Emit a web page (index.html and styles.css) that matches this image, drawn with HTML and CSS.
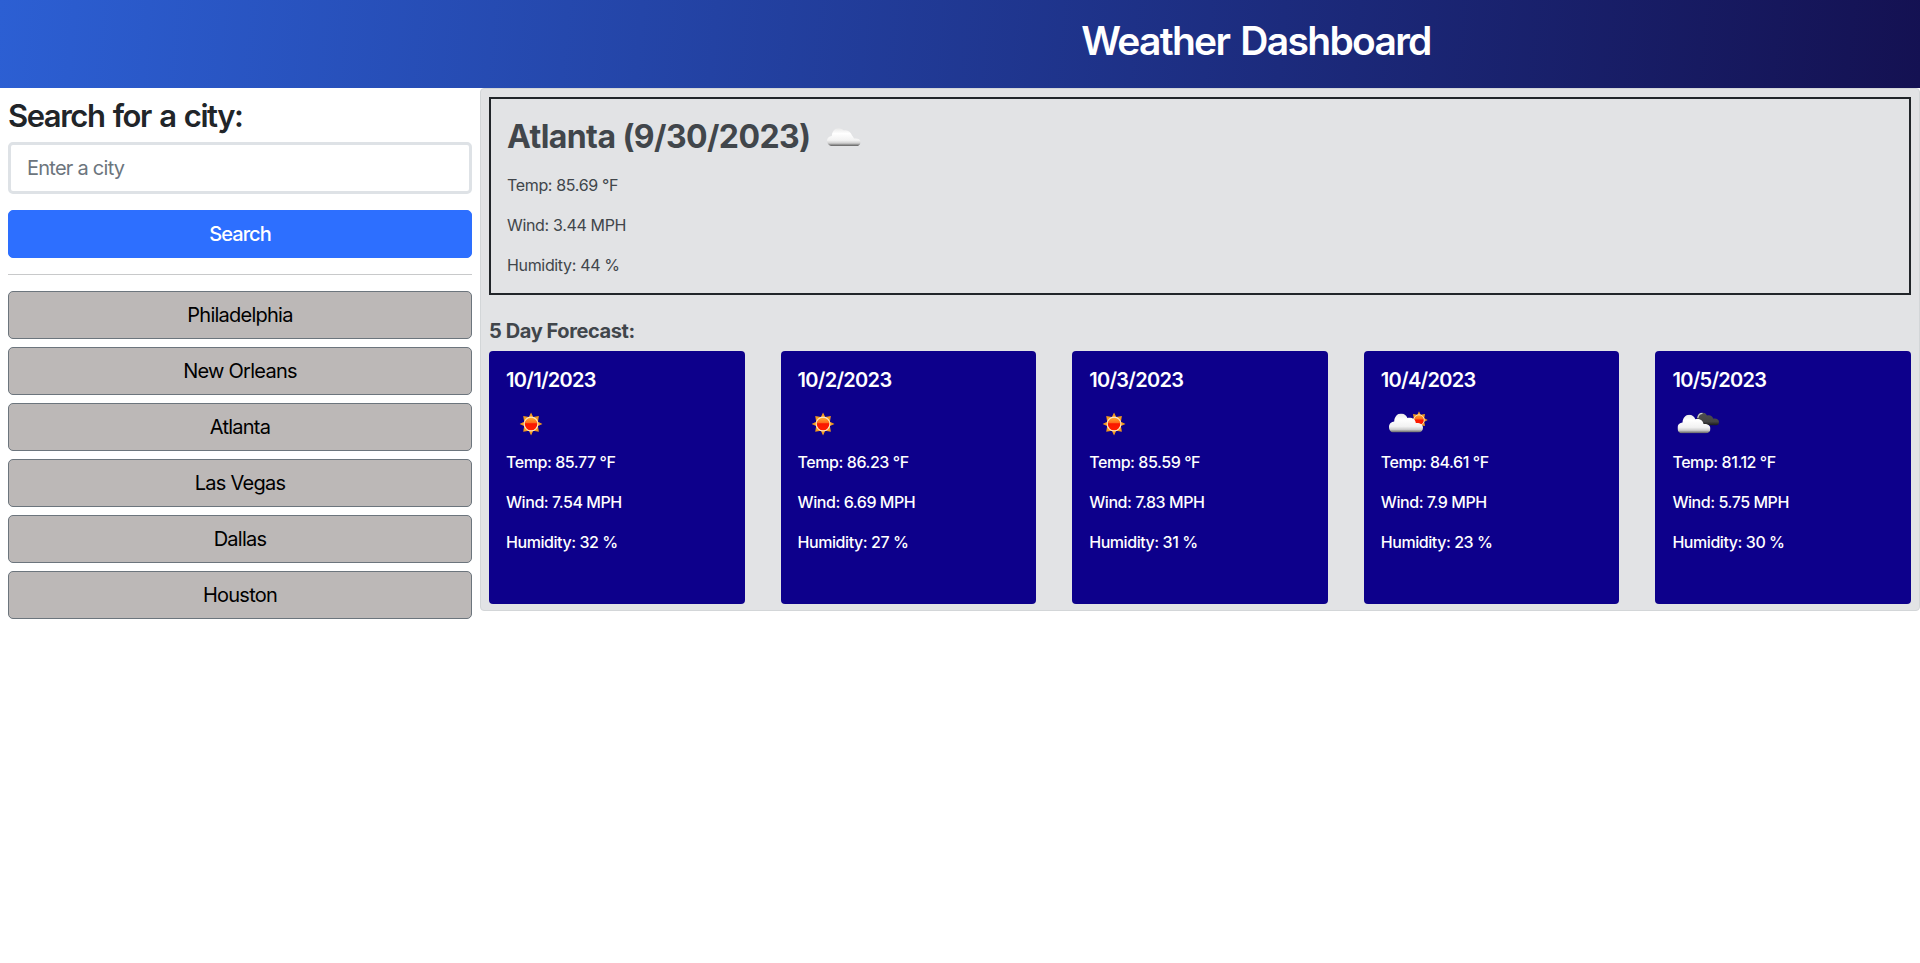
FILE: index.html
```html
<!DOCTYPE html>
<html lang="en">
<head>
<meta charset="utf-8">
<title>Weather Dashboard</title>
<link rel="stylesheet" href="styles.css">
</head>
<body>
<svg class="defs" aria-hidden="true">
  <defs>
    <linearGradient id="cloudFill" x1="0" y1="0" x2="0" y2="1">
      <stop offset="0" stop-color="#e9e9e9"/><stop offset=".3" stop-color="#fff"/><stop offset=".68" stop-color="#f2f2f2"/><stop offset=".84" stop-color="#cfcfcf"/><stop offset=".93" stop-color="#8c8c8c"/><stop offset="1" stop-color="#626262"/>
    </linearGradient>
    <linearGradient id="darkFill" x1="0" y1="0" x2="0" y2="1">
      <stop offset="0" stop-color="#505050"/><stop offset=".7" stop-color="#444"/><stop offset="1" stop-color="#161616"/>
    </linearGradient>
    <linearGradient id="sunFill" x1="0" y1="0" x2="0" y2="1">
      <stop offset="0" stop-color="#ffb52e"/><stop offset=".42" stop-color="#ff6a1c"/><stop offset=".48" stop-color="#f91800"/><stop offset="1" stop-color="#ff2000"/>
    </linearGradient>
    <symbol id="sun" viewBox="0 0 24 24">
      <path fill="#f39a1b" d="M12 .3 14.2 5 20 4 19 9.800 23.700 12 19 14.200 20 20 14.200 19 12 23.700 9.800 19 4 20 5 14.200 .3 12 5 9.800 4 4 9.800 5Z"/>
      <circle cx="12" cy="12" r="7" fill="url(#sunFill)" stroke="#fbe6c4" stroke-width="1.200"/>
    </symbol>
    <symbol id="cloud" viewBox="0 0 34 19">
      <path fill="url(#cloudFill)" d="M5 19C2 19 0 17 0 13.500 0 10.200 2.500 8.200 5.200 8 5.400 3.300 8.300 0 12 0c3 0 5.200 1.700 6.400 4.500 4-.8 8 .9 8.400 5.100C31 9.200 34 11.200 34 14.300 34 17.300 32 19 29 19Z"/>
    </symbol>
    <symbol id="flatCloud" viewBox="0 0 34 18">
      <path fill="url(#cloudFill)" d="M4 18C1.500 17.300 0 15 0 12.800 0 10 2 8.300 4.800 8 5 3.600 7.500 .2 11.500 .2c2.600 0 4 1.200 5 2 4.500-.2 7 1.200 8.500 5.400 1 1 1.500 1.800 2 3 3.800-.4 6.500 .6 6.500 3.400 0 2-1 3.300-2.500 4Z"/>
    </symbol>
    <symbol id="darkCloud" viewBox="0 0 22 13">
      <path fill="url(#darkFill)" d="M0 7C0 3 1.800 0 5.200 0 7.500 0 9 1 10 2.900c3-.8 5.400 .3 6.300 3.300C19.500 5.700 22 7.200 22 9.600 22 11.800 20.800 13 19 13H5Z"/>
      <path fill="none" stroke="#c9c9c9" stroke-width="1.300" d="M.8 5.500C1.300 2.500 3 .8 5.500.8"/>
    </symbol>
  </defs>
</svg>

<header class="header"><h1 class="title">Weather Dashboard</h1></header>
<div class="layout">
  <aside class="sidebar">
    <h2 class="search-title">Search for a city:</h2>
    <input class="search-input" type="text" placeholder="Enter a city">
    <button class="btn btn-search">Search</button>
    <hr class="divider">
    <div class="history">
      <button class="btn btn-city">Philadelphia</button>
      <button class="btn btn-city">New Orleans</button>
      <button class="btn btn-city">Atlanta</button>
      <button class="btn btn-city">Las Vegas</button>
      <button class="btn btn-city">Dallas</button>
      <button class="btn btn-city">Houston</button>
    </div>
  </aside>
  <main class="panel">
    <section class="current">
      <h2 class="current-title"><span class="current-city">Atlanta (9/30/2023)</span>
        <svg class="icon" viewBox="0 0 50 50"><use href="#flatCloud" x="8" y="13" width="34" height="18"/></svg>
      </h2>
      <p class="stat">Temp: 85.69 °F</p>
      <p class="stat">Wind: 3.44 MPH</p>
      <p class="stat">Humidity: 44 %</p>
    </section>
    <h3 class="forecast-title">5 Day Forecast:</h3>
    <section class="forecast">
      <article class="card">
        <h4 class="date">10/1/2023</h4>
        <svg class="icon" viewBox="0 0 50 50"><use href="#sun" x="13.300" y="12.200" width="23.500" height="23.500"/></svg>
        <p class="stat">Temp: 85.77 °F</p><p class="stat">Wind: 7.54 MPH</p><p class="stat">Humidity: 32 %</p>
      </article>
      <article class="card">
        <h4 class="date">10/2/2023</h4>
        <svg class="icon" viewBox="0 0 50 50"><use href="#sun" x="13.300" y="12.200" width="23.500" height="23.500"/></svg>
        <p class="stat">Temp: 86.23 °F</p><p class="stat">Wind: 6.69 MPH</p><p class="stat">Humidity: 27 %</p>
      </article>
      <article class="card">
        <h4 class="date">10/3/2023</h4>
        <svg class="icon" viewBox="0 0 50 50"><use href="#sun" x="13.300" y="12.200" width="23.500" height="23.500"/></svg>
        <p class="stat">Temp: 85.59 °F</p><p class="stat">Wind: 7.83 MPH</p><p class="stat">Humidity: 31 %</p>
      </article>
      <article class="card">
        <h4 class="date">10/4/2023</h4>
        <svg class="icon" viewBox="0 0 50 50"><use href="#sun" x="29" y="11" width="18" height="18"/><use href="#cloud" x="8" y="13.500" width="34" height="19"/></svg>
        <p class="stat">Temp: 84.61 °F</p><p class="stat">Wind: 7.9 MPH</p><p class="stat">Humidity: 23 %</p>
      </article>
      <article class="card">
        <h4 class="date">10/5/2023</h4>
        <svg class="icon" viewBox="0 0 50 50"><use href="#darkCloud" x="25" y="12.500" width="22" height="13"/><use href="#cloud" x="5.500" y="14.500" width="33" height="19"/></svg>
        <p class="stat">Temp: 81.12 °F</p><p class="stat">Wind: 5.75 MPH</p><p class="stat">Humidity: 30 %</p>
      </article>
    </section>
  </main>
</div>
</body>
</html>
```

FILE: styles.css
```css
* { box-sizing: border-box; }
body {
  margin: 0;
  background: #fff;
  color: #212529;
  font: 400 16px/24px Inter, "Liberation Sans", sans-serif;
}
h1, h2, h3, h4, p { margin: 0; }
.defs { display: block; width: 0; height: 0; }
.header {
  height: 88px;
  padding: 17px 0 23px 592px;
  background: linear-gradient(95deg, #2c5fd3, #141152);
  text-align: center;
}
.title {
  color: #fff;
  font-size: 39px;
  font-weight: 600;
  line-height: 48px;
  letter-spacing: -1.7px;
  word-spacing: 3px;
}
.layout { display: grid; grid-template-columns: 480px 1440px; align-items: start; }
.sidebar { display: flex; flex-direction: column; padding: 9px 8px 8px; }
.search-title {
  margin-bottom: 7px;
  font-size: 31px;
  font-weight: 600;
  line-height: 38px;
  letter-spacing: -1.47px;
  word-spacing: 2px;
}
.search-input {
  height: 52px;
  padding: 0 16px;
  border: 3px solid #dee2e6;
  border-radius: 5px;
  font: 400 20px/30px Inter, sans-serif;
  letter-spacing: -0.75px;
}
.search-input::placeholder { color: #6c757d; opacity: 1; }
.btn {
  height: 48px;
  padding: 0;
  border: 1px solid;
  border-radius: 5px;
  font: 400 20px/30px Inter, sans-serif;
  letter-spacing: -0.75px;
}
.btn-search { margin-top: 16px; border-color: #2d6fff; background: #2d6fff; color: #fff; font-weight: 500; letter-spacing: -0.95px; }
.divider { width: 100%; height: 1px; margin: 16px 0; border: 0; background: #c8c9ca; }
.history { display: grid; gap: 8px; }
.btn-city { border-color: #6c757d; background: #bcb8b7; color: #000; }
.panel {
  height: 523px;
  padding: 8px;
  border: 1px solid #d3d6d8;
  border-radius: 4px;
  background: #e2e3e5;
  color: #41464b;
}
.current { height: 198px; padding: 16px; border: 2px solid #212529; }
.current-title {
  display: flex;
  align-items: flex-start;
  gap: 8px;
  height: 50px;
  margin-bottom: 8px;
  font-size: 32px;
  font-weight: 700;
  line-height: 44px;
  letter-spacing: -0.58px;
}
.icon { display: block; width: 50px; height: 50px; flex: none; }
.stat { margin-bottom: 16px; letter-spacing: -0.34px; }
.forecast-title {
  margin: 24px 0 8px;
  font-size: 20px;
  font-weight: 700;
  line-height: 24px;
  letter-spacing: -0.4px;
}
.forecast { display: grid; grid-template-columns: repeat(5, 1fr); gap: 36px; }
.card {
  height: 253px;
  padding: 17px;
  border-radius: 4px;
  background: #0d008b;
  color: #fff;
}
.card .stat { font-weight: 500; letter-spacing: -0.44px; }
.date { margin-bottom: 8px; font-size: 20px; font-weight: 600; line-height: 24px; letter-spacing: -0.7px; }
```
